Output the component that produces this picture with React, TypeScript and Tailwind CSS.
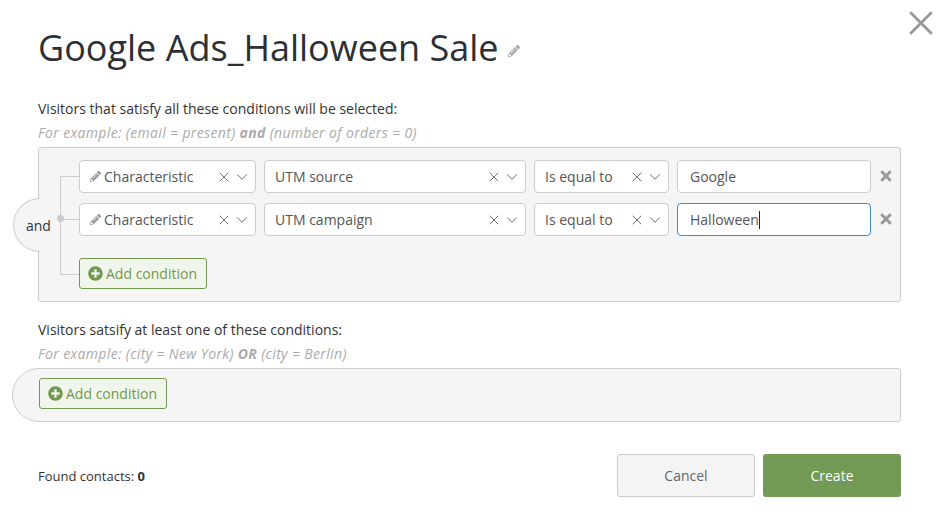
import { ChevronDown, X } from 'lucide-react'
import { FaPencilAlt, FaPlusCircle, FaTimes } from 'react-icons/fa'

const FIELD = 'h-[33px] flex items-center rounded-[4px] border bg-white text-[14px] text-[#555555]'

function SelectBox({ label, width, pencil }: { label: string; width: string; pencil?: boolean }) {
  return (
    <div className={`${FIELD} border-[#cccccc] ${width} pl-[10px] pr-[4px]`}>
      {pencil && <FaPencilAlt size={11} className="text-[#999999] mr-[3px] shrink-0" />}
      <span className="flex-1 whitespace-nowrap">{label}</span>
      <X size={16} strokeWidth={1.4} className="text-[#666666] mr-[1px] shrink-0" />
      <ChevronDown size={18} strokeWidth={1.3} className="text-[#666666] shrink-0" />
    </div>
  )
}

function AddCondition() {
  return (
    <button
      type="button"
      className="w-[128px] h-[31px] flex items-center justify-center gap-[3px] pr-[1px] rounded-[3px] border border-[#70994f] bg-[#f0f6ec] text-[14px] text-[#70994f]"
    >
      <FaPlusCircle size={15} className="shrink-0" />
      Add condition
    </button>
  )
}

function ConditionRow({ field, value, focused }: { field: string; value: string; focused?: boolean }) {
  return (
    <div className="flex items-center gap-2">
      <SelectBox label="Characteristic" width="w-[177px]" pencil />
      <SelectBox label={field} width="w-[262px]" />
      <SelectBox label="Is equal to" width="w-[135px]" />
      <div className={`${FIELD} w-[194px] px-3 ${focused ? 'border-[#3b8dd6]' : 'border-[#cccccc]'}`}>
        {value}
        {focused && <span className="w-px h-[18px] bg-[#222222]" />}
      </div>
      <FaTimes size={16} className="text-[#999999] ml-[-1px] mb-[2px]" />
    </div>
  )
}

export default function App() {
  return (
    <div
      className="relative w-[936px] h-[530px] overflow-hidden bg-white text-[#333333]"
      style={{ fontFamily: '"Open Sans", sans-serif' }}
    >
      <button type="button" className="absolute top-[3px] right-[-5px] text-[#999999]">
        <X size={40} strokeWidth={1.7} />
      </button>

      <div className="pl-[38px] pr-[35px] pt-[23px]">
        <h1 className="flex items-center text-[36px] leading-[50px] text-[#2b3036]">
          Google Ads_Halloween Sale
          <FaPencilAlt size={12} className="text-[#aaaaaa] ml-[9px] mt-[6px]" />
        </h1>

        <p className="mt-[24px] text-[14px] leading-[24px]">Visitors that satisfy all these conditions will be selected:</p>
        <p className="text-[14px] leading-[24px] italic tracking-[0.35px] text-[#aaaaaa]">
          For example: (email = present) <b>and</b> (number of orders = 0)
        </p>

        <div className="relative mt-[2px] h-[155px] rounded-[3px] border border-[#cccccc] bg-[#f5f5f5] pl-[40px] pt-[12px]">
          {/* and tab sits over the panel's left edge */}
          <div className="absolute left-[-26px] top-[50px] w-[27px] h-[54px] flex items-center rounded-l-[27px] border border-r-0 border-[#cccccc] bg-[#f5f5f5] pl-[12px] text-[14px]">
            and
          </div>
          <div className="absolute left-[21px] top-[28px] w-[19px] h-[99px] border-l border-t border-b border-[#cccccc]" />
          <div className="absolute left-[21px] top-[71px] w-[19px] h-px bg-[#cccccc]" />
          <div className="absolute left-[18px] top-[67px] w-[7px] h-[7px] rounded-full bg-[#cccccc]" />

          <div className="flex flex-col gap-[10px]">
            <ConditionRow field="UTM source" value="Google" />
            <ConditionRow field="UTM campaign" value="Halloween" focused />
          </div>
          <div className="mt-[22px]">
            <AddCondition />
          </div>
        </div>

        <p className="mt-[16px] text-[14px] leading-[24px]">Visitors satsify at least one of these conditions:</p>
        <p className="text-[14px] leading-[24px] italic tracking-[0.35px] text-[#aaaaaa]">
          For example: (city = New York) <b>OR</b> (city = Berlin)
        </p>

        <div className="ml-[-26px] mt-[2px] h-[54px] rounded-l-[27px] rounded-r-[3px] border border-[#cccccc] bg-[#f5f5f5] pl-[26px] pt-[9px]">
          <AddCondition />
        </div>

        <div className="mt-[32px] flex items-center">
          <div className="flex-1 pt-[2px] text-[13px]">
            Found contacts: <b>0</b>
          </div>
          <button type="button" className="w-[138px] h-[43px] rounded-[3px] border border-[#cccccc] bg-[#f4f4f4] text-[14px] text-[#666666]">
            Cancel
          </button>
          <button type="button" className="ml-2 w-[138px] h-[43px] rounded-[3px] bg-[#729a55] text-[14px] text-white">
            Create
          </button>
        </div>
      </div>
    </div>
  )
}
